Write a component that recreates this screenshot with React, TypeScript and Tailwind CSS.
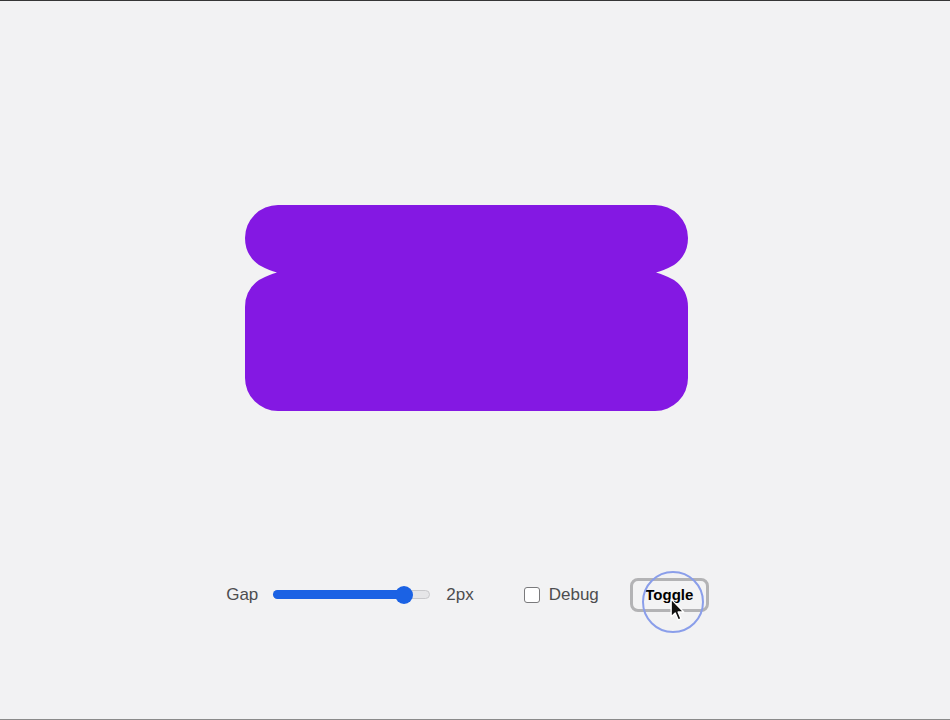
import { useState } from 'react';

// Two rounded bars fused across a thin gap, like the gooey filter would render them.
const BLOB_PATH =
  'M 33 0 H 410 A 33 33 0 0 1 443 33 A 33 33 0 0 1 429 60 Q 419 65.5 411 67.5 Q 419 69.5 429 75 ' +
  'A 33 33 0 0 1 443 102 V 173 A 33 33 0 0 1 410 206 H 33 A 33 33 0 0 1 0 173 V 102 ' +
  'A 33 33 0 0 1 14 75 Q 24 69.5 32 67.5 Q 24 65.5 14 60 A 33 33 0 0 1 0 33 A 33 33 0 0 1 33 0 Z';

function Blob() {
  return (
    <svg width={443} height={206} viewBox="0 0 443 206" className="block">
      <path d={BLOB_PATH} fill="#8418e3" />
    </svg>
  );
}

function GapSlider({ value }: { value: number }) {
  // value is 0..1 along the track
  const fill = Math.round(157 * value);
  return (
    <div className="relative h-[18px] w-[157px]">
      <div className="absolute left-0 top-[4px] h-[9px] w-full rounded-full border border-[#c9c9cc] bg-[#e6e6e8]" />
      <div
        className="absolute left-0 top-[4px] h-[9px] rounded-full bg-[#1b62e4]"
        style={{ width: fill }}
      />
      <div
        className="absolute top-0 h-[18px] w-[18px] rounded-full bg-[#1b62e4]"
        style={{ left: fill - 9 }}
      />
    </div>
  );
}

function Pointer() {
  return (
    <svg width={16} height={24} viewBox="0 0 14 21" className="block">
      <path
        d="M1 1 L1 16.5 L4.6 13.1 L7.2 19.2 L9.6 18.2 L7.1 12.3 L12 12.3 Z"
        fill="#111"
        stroke="#fff"
        strokeWidth={1.2}
        strokeLinejoin="round"
      />
    </svg>
  );
}

export default function App() {
  const [debug, setDebug] = useState(false);

  return (
    <div className="flex h-[720px] w-full flex-col items-center border-t border-b border-t-[#363636] border-b-[#8a8a8a] bg-[#f2f2f3] pr-[18px] pt-[204px] font-['Liberation_Sans',Arial,sans-serif]">
      <Blob />

      <div className="mt-[167px] ml-[3px] flex h-[34px] items-center text-[17px] text-[#4d4d4f]">
        <span>Gap</span>
        <div className="ml-[15px]">
          <GapSlider value={0.835} />
        </div>
        <span className="ml-[16px]">2px</span>

        <label className="ml-[50px] flex items-center gap-[9px]">
          <input
            type="checkbox"
            checked={debug}
            onChange={(e) => setDebug(e.target.checked)}
            className="h-[16px] w-[16px] appearance-none rounded-[3px] border border-[#7a7a7c] bg-white"
          />
          <span>Debug</span>
        </label>

        <div className="relative ml-[31px]">
          <button
            type="button"
            className="flex h-[34px] w-[79px] items-center justify-center rounded-[8px] border-[3px] border-[#b3b3b5] bg-[#f3f3f4] text-[15px] font-bold text-black"
          >
            Toggle
          </button>
          {/* click ring + cursor */}
          <div className="pointer-events-none absolute left-[12px] top-[-7px] h-[62px] w-[62px] rounded-full border-2 border-[#8a9eea]" />
          <div className="pointer-events-none absolute left-[40px] top-[20px]">
            <Pointer />
          </div>
        </div>
      </div>
    </div>
  );
}
